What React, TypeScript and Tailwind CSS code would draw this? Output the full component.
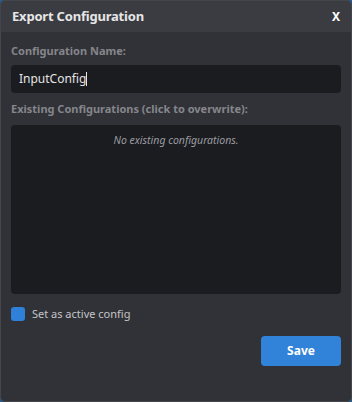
import React from "react";

export default function App() {
  return (
    <div className="w-[352px] h-[402px] bg-[#2a5a8a]" style={{ fontFamily: '"Noto Sans", sans-serif' }}>
      <div className="w-full h-full flex flex-col rounded-[5px] border border-[#45464b] bg-[#313237] overflow-hidden">
        <div className="h-[31px] shrink-0 bg-[#3b3c41] flex items-center justify-between pl-[11px] pr-[11px]">
          <span className="text-[13px] font-bold text-[#e6e6e6] tracking-[-0.2px]">Export Configuration</span>
          <span className="text-[12px] font-bold text-white">X</span>
        </div>
        <div className="flex flex-col px-[10px] pt-[10px]">
          <div className="text-[11px] font-bold text-[#85868b] h-[18px] leading-[18px]">Configuration Name:</div>
          <div className="mt-[5px] h-[28px] rounded-[4px] bg-[#1b1c20] flex items-center pl-[8px] text-[12px] text-[#e4e4e4]">
            InputConfig<span className="w-px h-[14px] bg-[#e4e4e4]" />
          </div>
          <div className="mt-[7px] text-[11px] font-bold text-[#85868b] h-[18px] leading-[18px]">Existing Configurations (click to overwrite):</div>
          <div className="mt-[7px] h-[169px] rounded-[4px] bg-[#1b1c20] flex justify-center pt-[8px]">
            <span className="text-[10.5px] italic text-[#9a9ba0]">No existing configurations.</span>
          </div>
          <div className="mt-[12px] h-[16px] flex items-center gap-[7px]">
            <div className="w-[14px] h-[14px] rounded-[3px] bg-[#2f80d8]" />
            <span className="text-[11px] text-[#c4c4c8]">Set as active config</span>
          </div>
          <div className="mt-[14px] flex justify-end">
            <button className="w-[80px] h-[30px] rounded-[4px] bg-[#3182d9] text-white text-[12px] font-bold">Save</button>
          </div>
        </div>
      </div>
    </div>
  );
}
